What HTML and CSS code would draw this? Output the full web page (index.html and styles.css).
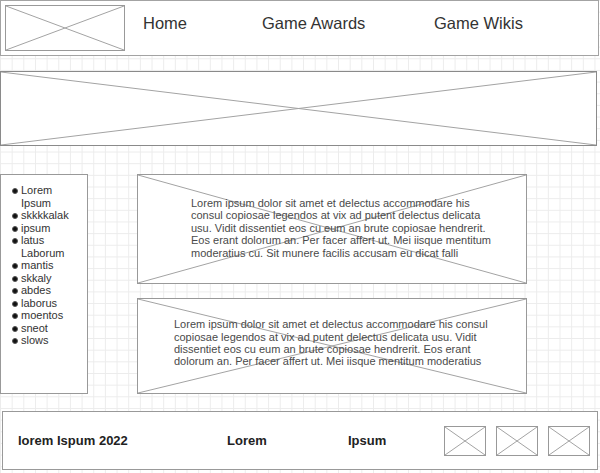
FILE: index.html
```html
<!DOCTYPE html>
<html lang="en">
<head>
  <meta charset="UTF-8">
  <title>Game Site Wireframe</title>
  <link rel="stylesheet" href="styles.css">
</head>
<body>
  <div class="page">
    <header class="topbar">
      <div class="logo ph"></div>
      <nav class="nav">
        <a href="#">Home</a>
        <a href="#">Game Awards</a>
        <a href="#">Game Wikis</a>
      </nav>
    </header>

    <div class="banner ph"></div>

    <main class="content">
      <aside class="sidebar">
        <ul>
          <li>Lorem Ipsum</li>
          <li>skkkkalak</li>
          <li>ipsum</li>
          <li>latus Laborum</li>
          <li>mantis</li>
          <li>skkaly</li>
          <li>abdes</li>
          <li>laborus</li>
          <li>moentos</li>
          <li>sneot</li>
          <li>slows</li>
        </ul>
      </aside>

      <section class="cards">
        <article class="card card-top ph">
          <p>Lorem ipsum dolor sit amet et delectus accommodare his<br>
          consul copiosae legendos at vix ad putent delectus delicata<br>
          usu. Vidit dissentiet eos cu eum an brute copiosae hendrerit.<br>
          Eos erant dolorum an. Per facer affert ut. Mei iisque mentitum<br>
          moderatius cu. Sit munere facilis accusam eu dicat falli</p>
        </article>
        <article class="card card-bottom ph">
          <p>Lorem ipsum dolor sit amet et delectus accommodare his consul<br>
          copiosae legendos at vix ad putent delectus delicata usu. Vidit<br>
          dissentiet eos cu eum an brute copiosae hendrerit. Eos erant<br>
          dolorum an. Per facer affert ut. Mei iisque mentitum moderatius</p>
        </article>
      </section>
    </main>

    <footer class="footer">
      <span class="copy">lorem Ispum 2022</span>
      <span class="flink">Lorem</span>
      <span>Ipsum</span>
      <div class="socials">
        <span class="social ph"></span>
        <span class="social ph"></span>
        <span class="social ph"></span>
      </div>
    </footer>
  </div>
</body>
</html>
```

FILE: styles.css
```css
body {
  margin: 0;
  min-height: 473px;
  font-family: "Liberation Sans", Arial, sans-serif;
  color: #333;
  background-color: #fff;
  background-image:
    linear-gradient(to right, #ececec 1px, transparent 1px),
    linear-gradient(to bottom, #ececec 1px, transparent 1px);
  background-size: 11.67px 11.67px;
}

.page {
  width: 599px;
}

/* placeholder box with an X across it */
.ph {
  background-color: #fff;
  background-image: url("data:image/svg+xml,%3Csvg xmlns='http://www.w3.org/2000/svg' viewBox='0 0 100 100' preserveAspectRatio='none'%3E%3Cpath d='M0 0L100 100M100 0L0 100' stroke='%23a3a3a3' stroke-width='1' fill='none' vector-effect='non-scaling-stroke'/%3E%3C/svg%3E");
  background-size: 100% 100%;
  background-repeat: no-repeat;
}

.topbar {
  display: flex;
  align-items: flex-start;
  height: 56px;
  box-sizing: border-box;
  padding: 4px;
  border: 1px solid #a3a3a3;
  background: #fff;
}

.logo {
  width: 120px;
  height: 46px;
  box-sizing: border-box;
  border: 1px solid #999;
}

.nav {
  display: grid;
  grid-template-columns: 119px 172px auto;
  margin: 8px 0 0 18px;
  font-size: 16.5px;
  line-height: 20px;
}

.nav a {
  color: #333;
  text-decoration: none;
}

.banner {
  width: 597px;
  height: 75px;
  margin-top: 15px;
  box-sizing: border-box;
  border: 1px solid #8a8a8a;
}

.content {
  display: flex;
  margin-top: 28px;
}

.sidebar {
  width: 88px;
  box-sizing: border-box;
  padding-top: 9px;
  border: 1px solid #999;
  background: #fff;
}

.sidebar ul {
  width: 63px;
  margin: 0;
  padding-left: 12px;
  list-style: none;
  font-size: 11px;
  line-height: 12.5px;
  color: #333;
}

.sidebar li {
  position: relative;
  padding-left: 8px;
}

.sidebar li::before {
  content: "";
  position: absolute;
  left: -1px;
  top: 4px;
  width: 4px;
  height: 4px;
  border: 0.5px solid #555;
  border-radius: 50%;
  background: #111;
}

.cards {
  display: flex;
  flex-direction: column;
  gap: 14px;
  width: 390px;
  margin-left: 49px;
}

.card {
  display: flex;
  align-items: center;
  box-sizing: border-box;
  border: 1px solid #999;
  font-size: 11px;
  line-height: 12.4px;
  color: #4a4a4a;
}

.card p {
  margin: 0;
  white-space: nowrap;
}

.card-top {
  height: 110px;
  padding: 0 0 2px 53px;
}

.card-bottom {
  height: 96px;
  padding: 0 0 6px 36px;
}

.footer {
  display: flex;
  align-items: center;
  width: 596px;
  height: 59px;
  margin: 17px 0 0 2px;
  box-sizing: border-box;
  padding: 0 7px 0 15px;
  border: 1px solid #999;
  background: #fff;
  font-size: 13px;
  font-weight: bold;
  color: #222;
}

.copy {
  width: 209px;
}

.flink {
  width: 121px;
}

.socials {
  display: flex;
  gap: 10px;
  margin-left: auto;
}

.social {
  width: 42px;
  height: 30px;
  box-sizing: border-box;
  border: 1px solid #999;
}
```
